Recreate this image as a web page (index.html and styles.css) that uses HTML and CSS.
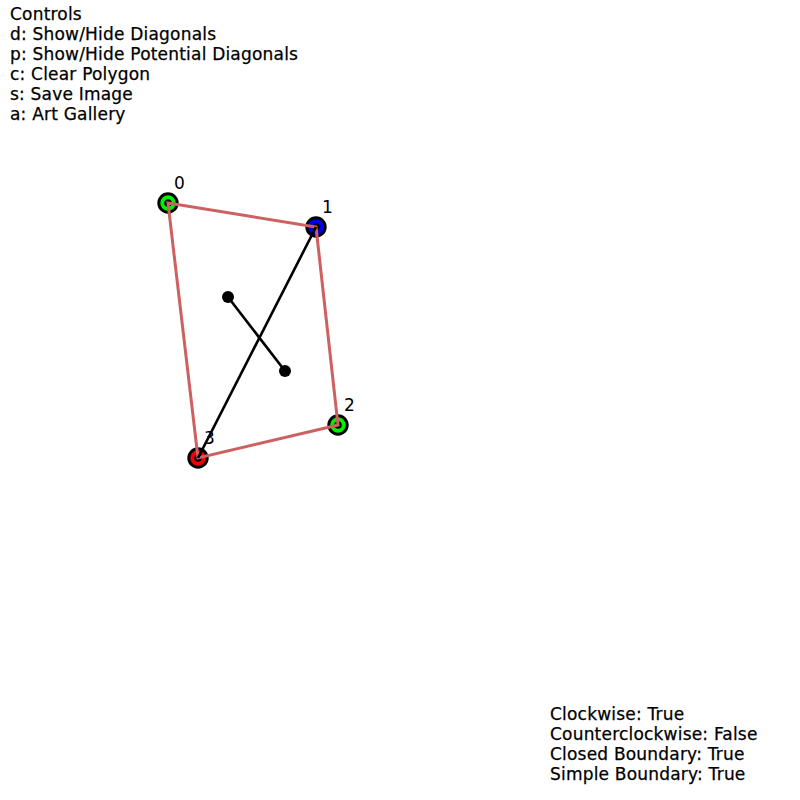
FILE: index.html
```html
<!DOCTYPE html>
<html>
<head>
<meta charset="utf-8">
<link rel="stylesheet" href="styles.css">
</head>
<body>
<div class="page">
  <svg class="canvas" width="800" height="800" viewBox="0 0 800 800" xmlns="http://www.w3.org/2000/svg">
    <g class="vertex">
      <circle cx="168" cy="203" r="9.2" fill="#00f000"/>
      <circle cx="168" cy="203" r="3.8" class="dot"/>
      <circle cx="316" cy="227" r="9.2" fill="#0000f0"/>
      <circle cx="316" cy="227" r="3.8" class="dot"/>
      <circle cx="338" cy="425" r="9.2" fill="#00f000"/>
      <circle cx="338" cy="425" r="3.8" class="dot"/>
      <circle cx="198" cy="458" r="9.2" fill="#f00000"/>
      <circle cx="198" cy="458" r="3.8" class="dot"/>
    </g>
    <polygon class="edge" points="168,203 316,227 338,425 198,458"/>
    <line class="diag" x1="316" y1="227" x2="198" y2="458"/>
    <line class="diag" x1="228" y1="297" x2="285" y2="371"/>
    <circle cx="228" cy="297" r="6" class="dot"/>
    <circle cx="285" cy="371" r="6" class="dot"/>
    <g class="label">
      <text x="174" y="189">0</text>
      <text x="322" y="213">1</text>
      <text x="344" y="411">2</text>
      <text x="204" y="444">3</text>
    </g>
  </svg>
  <div class="controls">
    <div>Controls</div>
    <div>d: Show/Hide Diagonals</div>
    <div>p: Show/Hide Potential Diagonals</div>
    <div>c: Clear Polygon</div>
    <div>s: Save Image</div>
    <div>a: Art Gallery</div>
  </div>
  <div class="status">
    <div>Clockwise: True</div>
    <div>Counterclockwise: False</div>
    <div>Closed Boundary: True</div>
    <div>Simple Boundary: True</div>
  </div>
</div>
</body>
</html>
```
FILE: styles.css
```css
html, body {
  margin: 0;
  padding: 0;
  background: #ffffff;
}
.page {
  position: relative;
  width: 800px;
  height: 800px;
  box-sizing: border-box;
  padding: 4px 0 16px 10px;
  display: flex;
  flex-direction: column;
  justify-content: space-between;
  font-family: "DejaVu Sans", sans-serif;
  font-size: 17px;
  line-height: 20px;
  letter-spacing: 0.2px;
  color: #000;
  overflow: hidden;
}
.canvas {
  position: absolute;
  left: 0;
  top: 0;
}
.controls, .status {
  position: relative;
  white-space: nowrap;
  -webkit-text-stroke: 0.25px #000;
}
.status {
  margin-left: 540px;
}
.vertex circle {
  stroke: #000;
  stroke-width: 3;
}
.vertex circle.dot {
  stroke: none;
}
.dot {
  fill: #000;
}
.edge {
  fill: none;
  stroke: #cd6060;
  stroke-width: 3;
  stroke-linejoin: miter;
}
.diag {
  stroke: #000;
  stroke-width: 2.6;
}
.label text {
  font-family: "DejaVu Sans", sans-serif;
  font-size: 17px;
  fill: #000;
}
```
